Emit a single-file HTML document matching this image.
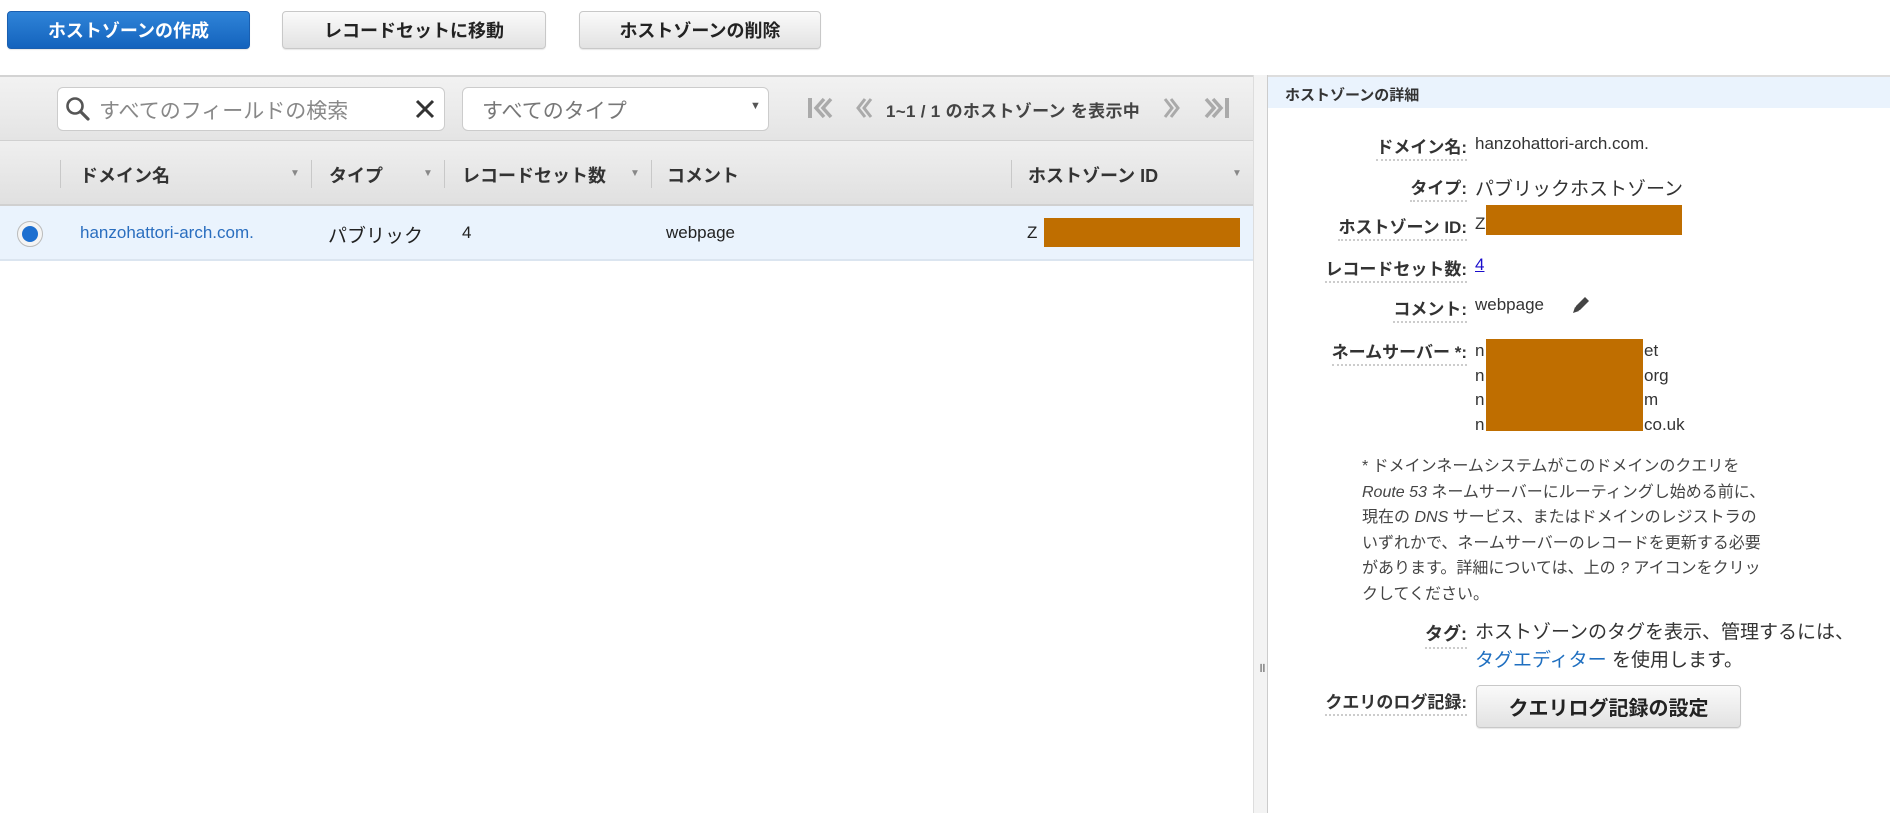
<!DOCTYPE html>
<html><head><meta charset="utf-8"><style>
*{box-sizing:border-box;margin:0;padding:0}
body{width:1890px;height:813px;background:#fff;font-family:"Liberation Sans","Noto Sans CJK JP",sans-serif;color:#333;position:relative;overflow:hidden;font-size:17px}
.abs{position:absolute}
.btn{position:absolute;top:11px;height:38px;border-radius:4px;border:1px solid #c8c8c8;background:linear-gradient(#fafafa,#e2e2e2);font-weight:bold;font-size:18px;color:#222;display:flex;align-items:center;justify-content:center;box-shadow:0 1px 1px rgba(0,0,0,.1)}
.btn.blue{background:linear-gradient(#2f84d8,#1463bd);border-color:#1a5fb0;color:#fff}
.tb{left:0;top:75px;width:1253px;height:66px;background:linear-gradient(#f2f2f2,#e4e4e4);border-top:2px solid #d3d3d3;border-bottom:1px solid #d0d0d0}
.hd{left:0;top:141px;width:1253px;height:65px;background:linear-gradient(#efefef,#e0e0e0);border-bottom:2px solid #d0d0d0}
.sep{position:absolute;top:160px;width:1px;height:28px;background:#c8c8c8}
.ht{position:absolute;top:162px;font-weight:bold;font-size:18px;color:#333}
.arr{position:absolute;top:168px;font-size:10px;color:#888}
.row{left:0;top:206px;width:1253px;height:55px;background:#eaf3fd;border-bottom:2px solid #dbe5f0}
.rt{position:absolute;top:223px;font-size:17px;color:#222}
.lab{position:absolute;right:423px;font-weight:bold;font-size:17px;color:#333;border-bottom:2px dotted #ccc;padding-bottom:1px;white-space:nowrap}
.val{position:absolute;left:1475px;font-size:17px;color:#333;white-space:nowrap}
.or{position:absolute;background:#bf6e00}
</style></head><body>
<div class="btn blue" style="left:7px;width:243px">ホストゾーンの作成</div>
<div class="btn" style="left:282px;width:264px">レコードセットに移動</div>
<div class="btn" style="left:579px;width:242px">ホストゾーンの削除</div>

<div class="abs tb"></div>
<div class="abs" style="left:57px;top:87px;width:388px;height:44px;background:#fff;border:1px solid #ccc;border-radius:6px"></div>
<svg class="abs" style="left:65px;top:96px" width="26" height="26" viewBox="0 0 26 26"><circle cx="10" cy="10" r="7.5" fill="none" stroke="#555" stroke-width="2.6"/><path d="M15.5 15.5L23 23" stroke="#555" stroke-width="3.2" stroke-linecap="round"/></svg>
<div class="abs" style="left:99px;top:95px;font-size:21px;color:#888">すべてのフィールドの検索</div>
<svg class="abs" style="left:414px;top:98px" width="22" height="22"><path d="M3 3L19 19M19 3L3 19" stroke="#333" stroke-width="3"/></svg>
<div class="abs" style="left:462px;top:87px;width:307px;height:44px;background:#fff;border:1px solid #ccc;border-radius:6px"></div>
<div class="abs" style="left:482px;top:95px;font-size:21px;color:#777">すべてのタイプ</div>
<div class="abs" style="left:750px;top:100px;font-size:11px;color:#555">▼</div>
<svg class="abs" style="left:806px;top:96px" width="30" height="24"><rect x="2" y="2" width="4" height="20" fill="#aaa"/><path d="M18 3L10 12L18 21M25 3L17 12L25 21" stroke="#aaa" stroke-width="3.5" fill="none"/></svg>
<svg class="abs" style="left:855px;top:96px" width="18" height="24"><path d="M10 3L3 12L10 21M16 3L9 12L16 21" stroke="#aaa" stroke-width="3" fill="none"/></svg>
<div class="abs" style="left:886px;top:97px;font-size:17px;font-weight:bold;color:#444;letter-spacing:0.3px">1~1 / 1 のホストゾーン を表示中</div>
<svg class="abs" style="left:1163px;top:96px" width="18" height="24"><path d="M2 3L9 12L2 21M8 3L15 12L8 21" stroke="#aaa" stroke-width="3" fill="none"/></svg>
<svg class="abs" style="left:1203px;top:96px" width="30" height="24"><path d="M3 3L11 12L3 21M10 3L18 12L10 21" stroke="#aaa" stroke-width="3.5" fill="none"/><rect x="22" y="2" width="4" height="20" fill="#aaa"/></svg>

<div class="abs hd"></div>
<div class="sep" style="left:60px"></div><div class="sep" style="left:311px"></div><div class="sep" style="left:444px"></div><div class="sep" style="left:651px"></div><div class="sep" style="left:1011px"></div>
<div class="ht" style="left:80px">ドメイン名</div><div class="arr" style="left:290px">▼</div>
<div class="ht" style="left:329px">タイプ</div><div class="arr" style="left:423px">▼</div>
<div class="ht" style="left:462px">レコードセット数</div><div class="arr" style="left:630px">▼</div>
<div class="ht" style="left:667px">コメント</div>
<div class="ht" style="left:1028px">ホストゾーン ID</div><div class="arr" style="left:1232px">▼</div>

<div class="abs row"></div>
<div class="abs" style="left:17px;top:221px;width:26px;height:26px;border-radius:50%;background:#f4f4f4;border:1px solid #bbb"></div>
<div class="abs" style="left:22px;top:226px;width:16px;height:16px;border-radius:50%;background:#1d6fd0"></div>
<div class="rt" style="left:80px;color:#2a6ebf">hanzohattori-arch.com.</div>
<div class="rt" style="left:328px;font-size:19px;top:221px">パブリック</div>
<div class="rt" style="left:462px">4</div>
<div class="rt" style="left:666px">webpage</div>
<div class="rt" style="left:1027px">Z</div>
<div class="or" style="left:1044px;top:218px;width:196px;height:29px"></div>

<div class="abs" style="left:1253px;top:75px;width:15px;height:738px;background:#f3f3f3;border-left:1px solid #ddd;border-right:1px solid #ccc"></div>
<div class="abs" style="left:1258px;top:658px;font-size:13px;color:#555">॥</div>
<div class="abs" style="left:1268px;top:75px;width:622px;height:2px;background:#ddd"></div>
<div class="abs" style="left:1268px;top:77px;width:622px;height:31px;background:#eaf3fd"></div>
<div class="abs" style="left:1285px;top:84px;font-size:15px;font-weight:bold;color:#333">ホストゾーンの詳細</div>

<div class="lab" style="top:133px">ドメイン名:</div><div class="val" style="top:134px">hanzohattori-arch.com.</div>
<div class="lab" style="top:174px">タイプ:</div><div class="val" style="top:174px;font-size:19px">パブリックホストゾーン</div>
<div class="lab" style="top:213px">ホストゾーン ID:</div><div class="val" style="top:214px">Z</div>
<div class="or" style="left:1486px;top:205px;width:196px;height:30px"></div>
<div class="lab" style="top:255px">レコードセット数:</div><div class="val" style="top:255px;color:#1a0dcc;text-decoration:underline">4</div>
<div class="lab" style="top:295px">コメント:</div><div class="val" style="top:295px">webpage</div>
<svg class="abs" style="left:1570px;top:294px" width="22" height="22"><path d="M4 18L6 12L15 3L19 7L10 16Z" fill="#444"/><path d="M3 19L5 13L9 17Z" fill="#444"/></svg>
<div class="lab" style="top:338px">ネームサーバー *:</div>
<div class="val" style="top:339px;line-height:24.5px">n<br>n<br>n<br>n</div>
<div class="val" style="left:1644px;top:339px;line-height:24.5px">et<br>org<br>m<br>co.uk</div>
<div class="or" style="left:1486px;top:339px;width:157px;height:92px"></div>

<div class="abs" style="left:1362px;top:454px;font-size:16px;line-height:25.5px;color:#444;width:460px">* ドメインネームシステムがこのドメインのクエリを<br><i>Route 53</i> ネームサーバーにルーティングし始める前に、<br>現在の <i>DNS</i> サービス、またはドメインのレジストラの<br>いずれかで、ネームサーバーのレコードを更新する必要<br>があります。詳細については、上の <i>?</i> アイコンをクリッ<br>クしてください。</div>

<div class="lab" style="top:620px;font-size:18px">タグ:</div>
<div class="val" style="top:619px;font-size:19px;line-height:28px">ホストゾーンのタグを表示、管理するには、<br><span style="color:#1f6fc0">タグエディター</span> を使用します。</div>
<div class="lab" style="top:688px">クエリのログ記録:</div>
<div class="btn" style="left:1476px;top:685px;width:265px;height:43px;font-size:20px">クエリログ記録の設定</div>
</body></html>
